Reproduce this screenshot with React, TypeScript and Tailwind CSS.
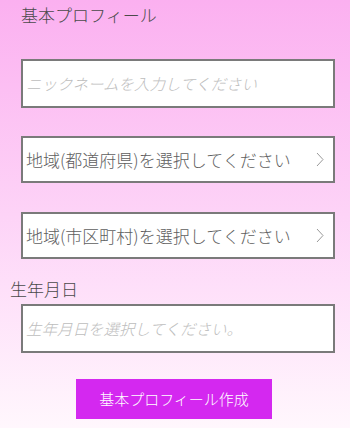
export default function App() {
  const font = {
    fontFamily: '"Noto Sans CJK JP", "Noto Sans", sans-serif',
  };

  return (
    <div
      className="w-[350px] h-[428px] overflow-hidden bg-gradient-to-b from-[#fbb0f0] via-[#fdd3f7] to-[#fff7fd]"
      style={font}
    >
      <div className="pl-[21px] pt-[4px] h-[28px] text-[17px] leading-[22px] font-light text-[#4a4a4a]">
        基本プロフィール
      </div>

      <div className="mt-[31px] ml-[21px] mr-[15px] h-[49px] border-2 border-[#7a7a7a] bg-white flex items-center pl-[3px]">
        <span className="text-[15.5px] italic font-light text-[#bdbdbd]">
          ニックネームを入力してください
        </span>
      </div>

      <div className="mt-[28px] ml-[21px] mr-[15px] h-[47px] border-2 border-[#7a7a7a] bg-white flex items-center justify-between pl-[3px] pr-[9px]">
        <span className="text-[17px] font-light text-[#5e5e5e]">
          地域(都道府県)を選択してください
        </span>
        <svg width="8" height="15" viewBox="0 0 8 15">
          <polyline
            points="1,1 7,7.5 1,14"
            fill="none"
            stroke="#999999"
            strokeWidth="1"
          />
        </svg>
      </div>

      <div className="mt-[29px] ml-[21px] mr-[15px] h-[47px] border-2 border-[#7a7a7a] bg-white flex items-center justify-between pl-[3px] pr-[9px]">
        <span className="text-[17px] font-light text-[#5e5e5e]">
          地域(市区町村)を選択してください
        </span>
        <svg width="8" height="15" viewBox="0 0 8 15">
          <polyline
            points="1,1 7,7.5 1,14"
            fill="none"
            stroke="#999999"
            strokeWidth="1"
          />
        </svg>
      </div>

      <div className="mt-[19px] pl-[10px] h-[24px] text-[17px] leading-[22px] font-light text-[#4a4a4a]">
        生年月日
      </div>

      <div className="mt-[2px] ml-[21px] mr-[15px] h-[49px] border-2 border-[#7a7a7a] bg-white flex items-center pl-[3px]">
        <span className="text-[15.5px] italic font-light text-[#bdbdbd]">
          生年月日を選択してください。
        </span>
      </div>

      <div className="mt-[26px] flex justify-center">
        <button className="ml-[-2px] w-[196px] h-[40px] bg-[#d428f0] text-white text-[15px] font-light">
          基本プロフィール作成
        </button>
      </div>
    </div>
  );
}
